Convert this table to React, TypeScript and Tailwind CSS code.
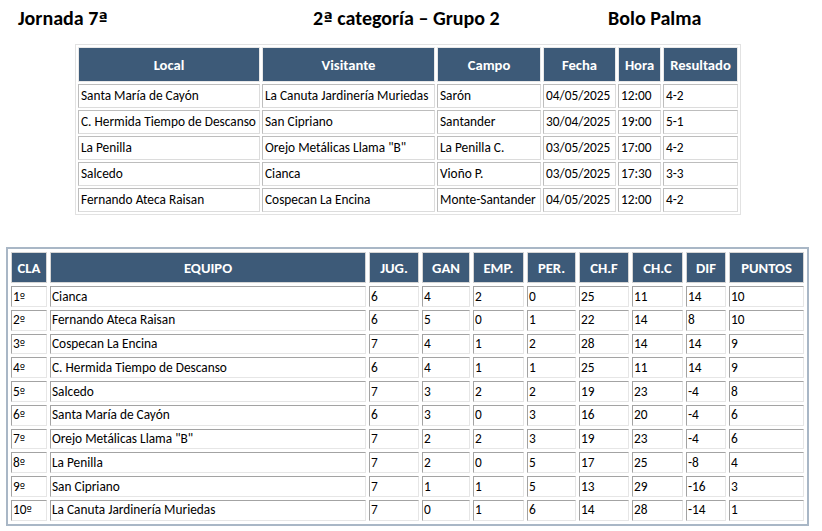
import React from 'react';

const partidos = [
  ['Santa María de Cayón', 'La Canuta Jardinería Muriedas', 'Sarón', '04/05/2025', '12:00', '4-2'],
  ['C. Hermida Tiempo de Descanso', 'San Cipriano', 'Santander', '30/04/2025', '19:00', '5-1'],
  ['La Penilla', 'Orejo Metálicas Llama "B"', 'La Penilla C.', '03/05/2025', '17:00', '4-2'],
  ['Salcedo', 'Cianca', 'Vioño P.', '03/05/2025', '17:30', '3-3'],
  ['Fernando Ateca Raisan', 'Cospecan La Encina', 'Monte-Santander', '04/05/2025', '12:00', '4-2'],
];

const clasificacion = [
  ['1º', 'Cianca', '6', '4', '2', '0', '25', '11', '14', '10'],
  ['2º', 'Fernando Ateca Raisan', '6', '5', '0', '1', '22', '14', '8', '10'],
  ['3º', 'Cospecan La Encina', '7', '4', '1', '2', '28', '14', '14', '9'],
  ['4º', 'C. Hermida Tiempo de Descanso', '6', '4', '1', '1', '25', '11', '14', '9'],
  ['5º', 'Salcedo', '7', '3', '2', '2', '19', '23', '-4', '8'],
  ['6º', 'Santa María de Cayón', '6', '3', '0', '3', '16', '20', '-4', '6'],
  ['7º', 'Orejo Metálicas Llama "B"', '7', '2', '2', '3', '19', '23', '-4', '6'],
  ['8º', 'La Penilla', '7', '2', '0', '5', '17', '25', '-8', '4'],
  ['9º', 'San Cipriano', '7', '1', '1', '5', '13', '29', '-16', '3'],
  ['10º', 'La Canuta Jardinería Muriedas', '7', '0', '1', '6', '14', '28', '-14', '1'],
];

const topCols = [
  { name: 'Local', w: 'w-[182px]' },
  { name: 'Visitante', w: 'w-[173px]' },
  { name: 'Campo', w: 'w-[104px]' },
  { name: 'Fecha', w: 'w-[73px]' },
  { name: 'Hora', w: 'w-[43px]' },
  { name: 'Resultado', w: 'w-[75px]' },
];

const tablaCols = [
  { name: 'CLA', w: 'w-[36px]' },
  { name: 'EQUIPO', w: 'w-[316px]' },
  { name: 'JUG.', w: 'w-[50px]' },
  { name: 'GAN', w: 'w-[48px]' },
  { name: 'EMP.', w: 'w-[51px]' },
  { name: 'PER.', w: 'w-[49px]' },
  { name: 'CH.F', w: 'w-[50px]' },
  { name: 'CH.C', w: 'w-[51px]' },
  { name: 'DIF', w: 'w-[40px]' },
  { name: 'PUNTOS', w: 'w-[75px]' },
];

// ordinal marks with an underline, as in the original sheet
const Ord: React.FC<{ text: string }> = ({ text }) => {
  const parts = text.split(/([ºª])/);
  return (
    <>
      {parts.map((p, i) =>
        p === 'º' || p === 'ª' ? (
          <span key={i} className="font-['DejaVu_Sans'] text-[0.85em]">{p}</span>
        ) : (
          <React.Fragment key={i}>{p}</React.Fragment>
        )
      )}
    </>
  );
};

const App: React.FC = () => {
  return (
    <div className="w-[822px] h-[531px] bg-white text-black overflow-hidden font-['Carlito','Calibri','Lato',sans-serif]">
      <div className="grid grid-cols-[295px_295px_auto] pl-[18px] pt-[6px] h-[44px] text-[20px] font-bold leading-6">
        <span><Ord text="Jornada 7ª" /></span>
        <span><Ord text="2ª categoría – Grupo 2" /></span>
        <span>Bolo Palma</span>
      </div>

      <table className="w-[666px] ml-[75px] table-fixed border-separate border-spacing-[2px] border border-[#e2e2e2] text-[13.33px]">
        <thead>
          <tr>
            {topCols.map((c) => (
              <th key={c.name} className={`${c.w} h-[35px] p-0 bg-[#3d5a78] text-white text-[14.67px] font-bold text-center border border-[#e8e8e8]`}>
                {c.name}
              </th>
            ))}
          </tr>
        </thead>
        <tbody>
          {partidos.map((row, i) => (
            <tr key={i}>
              {row.map((cell, j) => (
                <td key={j} className="h-[24px] px-[2px] py-0 whitespace-nowrap border border-t-[#bdbdbd] border-l-[#bdbdbd] border-r-[#dcdcdc] border-b-[#dcdcdc]">
                  {cell}
                </td>
              ))}
            </tr>
          ))}
        </tbody>
      </table>

      <table className="w-[802px] mt-[32px] ml-[6px] table-fixed border-separate border-spacing-[3px] border-2 border-[#a9b7c6] text-[13.33px]">
        <thead>
          <tr>
            {tablaCols.map((c) => (
              <th key={c.name} className={`${c.w} h-[31px] p-0 bg-[#3d5a78] text-white text-[14.67px] font-bold text-center border border-[#d5d5d5]`}>
                {c.name}
              </th>
            ))}
          </tr>
        </thead>
        <tbody>
          {clasificacion.map((row, i) => (
            <tr key={i}>
              {row.map((cell, j) => (
                <td key={j} className="h-[20.75px] px-[1px] py-0 whitespace-nowrap leading-none border border-t-[#a3a3a3] border-l-[#a3a3a3] border-r-[#e6e6e6] border-b-[#e6e6e6]">
                  <Ord text={cell} />
                </td>
              ))}
            </tr>
          ))}
        </tbody>
      </table>
    </div>
  );
};

export default App;
